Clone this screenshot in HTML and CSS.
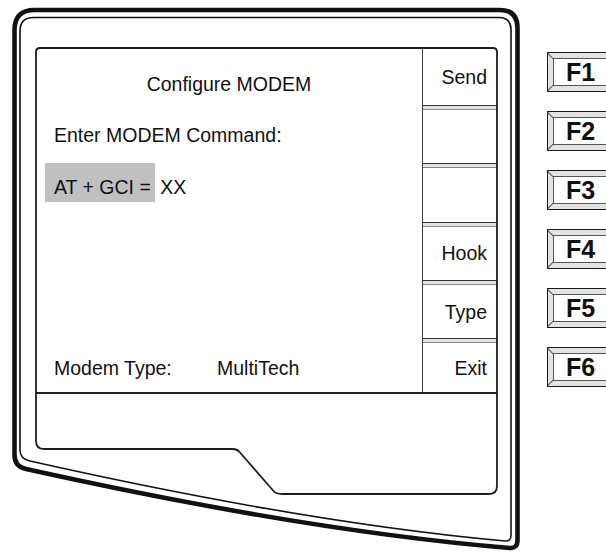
FILE: index.html
```html
<!DOCTYPE html>
<html lang="en">
<head>
  <meta charset="UTF-8">
  <meta name="viewport" content="width=device-width, initial-scale=1.0">
  <title>Configure MODEM</title>
  <link rel="stylesheet" href="styles.css">
</head>
<body>
  <div id="device">
    <svg class="bezel" width="606" height="552" viewBox="0 0 606 552">
      <path class="outer" d="M 14.5 455 V 30 Q 14.5 10 34.5 10 H 499.5 Q 517.5 10 517.5 28 V 540 Q 517.5 548.6 510 548 Q 306 531 26 469 Q 14.5 466.5 14.5 455 Z"/>
      <path class="inner" d="M 20 450 V 31 Q 20 17.5 33.5 17.5 H 499 Q 511 17.5 511 30 V 535 Q 511 541.5 505 541 Q 306 523 30 461 Q 20 458.8 20 450 Z"/>
      <path class="frame" d="M 36 52 Q 36 48 40 48 H 493 Q 497 48 497 52 V 486 Q 497 494 489 494 H 282 Q 276 494 273.5 491 L 239.5 452 Q 237 449 233 449 H 44 Q 36 449 36 441 Z"/>
    </svg>

    <div class="panel">
      <div class="screen">
        <div class="main">
          <div class="title">Configure MODEM</div>
          <div class="prompt">Enter MODEM Command:</div>
          <div class="command"><span class="sel">AT + GCI =</span> XX</div>
          <div class="status"><span class="status-label">Modem Type:</span>MultiTech</div>
        </div>
        <div class="softkeys">
          <div class="softkey">Send</div>
          <div class="softkey"></div>
          <div class="softkey"></div>
          <div class="softkey">Hook</div>
          <div class="softkey">Type</div>
          <div class="softkey">Exit</div>
        </div>
      </div>

      <div class="fkeys">
        <div class="fkey"><span>F1</span></div>
        <div class="fkey"><span>F2</span></div>
        <div class="fkey"><span>F3</span></div>
        <div class="fkey"><span>F4</span></div>
        <div class="fkey"><span>F5</span></div>
        <div class="fkey"><span>F6</span></div>
      </div>
    </div>
  </div>
</body>
</html>
```

FILE: styles.css
```css
body {
  margin: 0;
  background: #fff;
  font-family: "Liberation Sans", Arial, sans-serif;
  color: #111;
}

#device {
  position: relative;
  width: 606px;
  height: 552px;
  overflow: hidden;
}

.bezel {
  position: absolute;
  left: 0;
  top: 0;
  pointer-events: none;
}

.bezel path {
  fill: none;
  stroke: #111;
  stroke-linejoin: round;
}

.bezel .outer { stroke-width: 4.6; }
.bezel .inner { stroke-width: 1.6; }
.bezel .frame { stroke-width: 1.8; stroke: #1e1e1e; }

.panel {
  display: flex;
  align-items: flex-start;
  padding: 48px 0 0 36px;
}

/* display area */
.screen {
  display: flex;
  flex-shrink: 0;
  width: 461px;
  height: 346px;
  box-sizing: border-box;
  border-bottom: 2px solid #222;
  background: #fff;
  font-size: 19.5px;
  line-height: 22px;
}

.main {
  flex: 1;
  display: flex;
  flex-direction: column;
  padding: 25px 0 13px 0;
  border-right: 1px solid #3a3a3a;
}

.title {
  text-align: center;
}

.prompt,
.command,
.status {
  padding-left: 18px;
}

.prompt {
  margin-top: 29px;
}

.command {
  margin-top: 17px;
}

.sel {
  display: inline-block;
  margin-left: -9px;
  padding: 13px 4px 4px 9px;
  background: #c0c0c0;
}

.status {
  margin-top: auto;
}

.status-label {
  display: inline-block;
  width: 163px;
}

/* softkey labels */
.softkeys {
  width: 74px;
  display: flex;
  flex-direction: column;
  background: #e2e2e2;
}

.softkey {
  height: 53.3px;
  display: flex;
  align-items: center;
  justify-content: flex-end;
  padding-right: 10px;
  background: #fff;
  border-top: 1px solid #8a8a8a;
  border-bottom: 1px solid #333;
  margin-bottom: 3px;
}

.softkey:first-child {
  height: 57px;
  border-top: none;
}

.softkey:last-child {
  flex: 1;
  height: auto;
  border-bottom: none;
  margin-bottom: 0;
}

/* hardware F keys */
.fkeys {
  flex-shrink: 0;
  display: flex;
  flex-direction: column;
  gap: 19px;
  margin-left: 50px;
  padding-top: 4px;
}

.fkey {
  position: relative;
  width: 70px;
  height: 40px;
  box-sizing: border-box;
  border: 1.5px solid #1a1a1a;
  border-right: none;
  padding: 5px 0 5px 5px;
  background: #e3e3e3;
}

.fkey span {
  display: flex;
  align-items: center;
  height: 100%;
  box-sizing: border-box;
  border: 1px solid #555;
  border-right: none;
  padding-left: 12px;
  background: #fff;
  font-size: 25px;
  font-weight: bold;
  color: #111;
}

.fkey::before,
.fkey::after {
  content: "";
  position: absolute;
  left: 0;
  width: 7.5px;
  height: 1px;
  background: #444;
}

.fkey::before {
  top: 0;
  transform-origin: 0 0;
  transform: rotate(45deg);
}

.fkey::after {
  bottom: 0;
  transform-origin: 0 100%;
  transform: rotate(-45deg);
}
```
